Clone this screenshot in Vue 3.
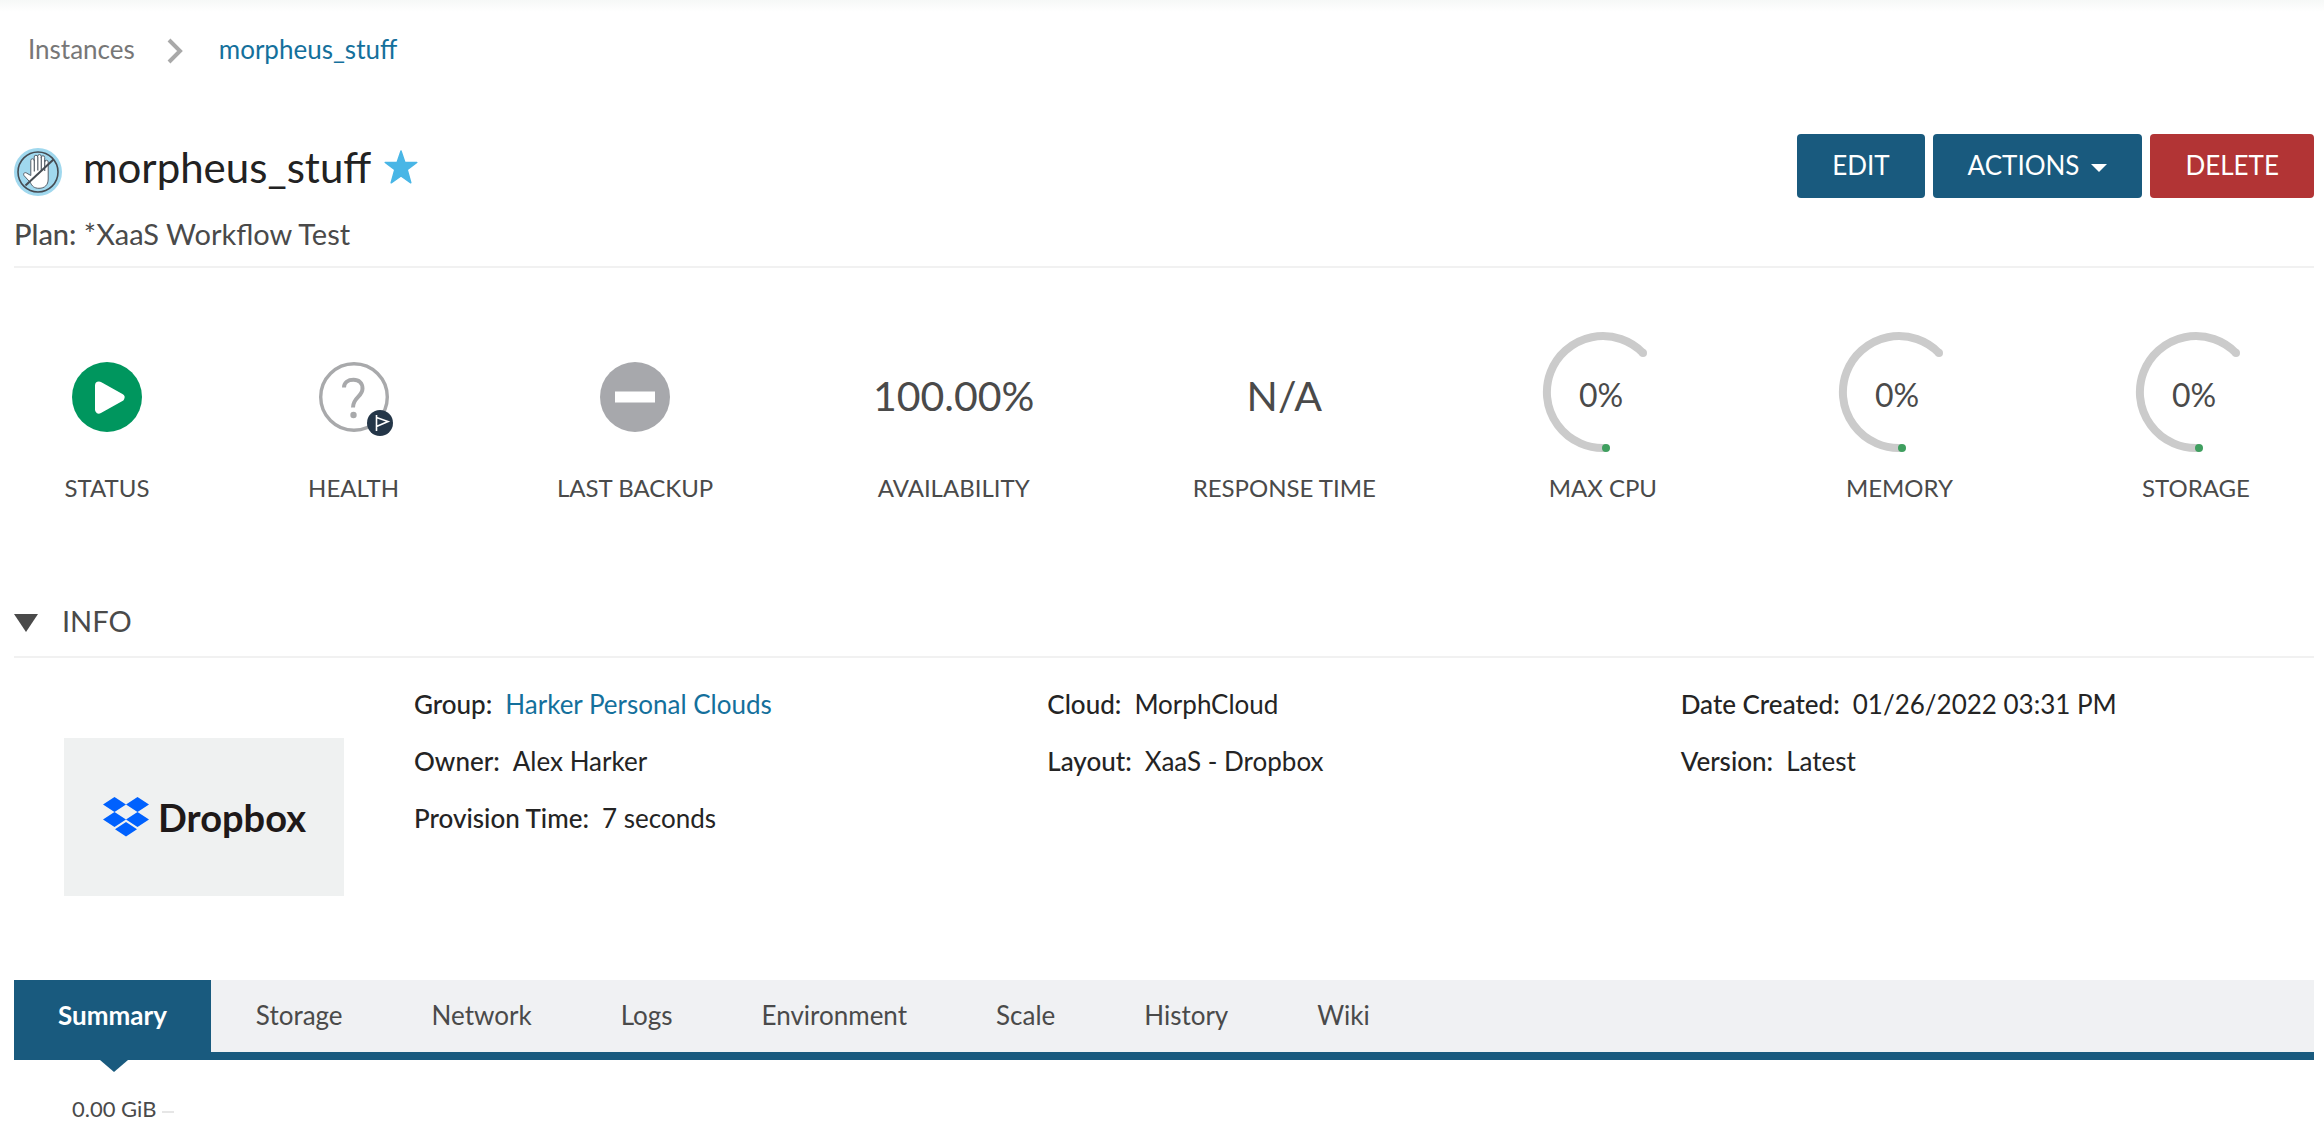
<script setup>
const stats = [
  { label: 'Status', kind: 'running' },
  { label: 'Health', kind: 'unknown' },
  { label: 'Last Backup', kind: 'none' },
  { label: 'Availability', kind: 'text', value: '100.00%' },
  { label: 'Response Time', kind: 'text', value: 'N/A' },
  { label: 'Max CPU', kind: 'gauge', value: '0%' },
  { label: 'Memory', kind: 'gauge', value: '0%' },
  { label: 'Storage', kind: 'gauge', value: '0%' },
]

const details = [
  [
    { label: 'Group', value: 'Harker Personal Clouds', link: true },
    { label: 'Owner', value: 'Alex Harker' },
    { label: 'Provision Time', value: '7 seconds' },
  ],
  [
    { label: 'Cloud', value: 'MorphCloud' },
    { label: 'Layout', value: 'XaaS - Dropbox' },
  ],
  [
    { label: 'Date Created', value: '01/26/2022 03:31 PM' },
    { label: 'Version', value: 'Latest' },
  ],
]

const tabs = ['Summary', 'Storage', 'Network', 'Logs', 'Environment', 'Scale', 'History', 'Wiki']
</script>

<template>
  <div class="page">
    <nav class="breadcrumb" aria-label="Breadcrumb">
      <a href="#" class="crumb">Instances</a>
      <svg class="chevron" width="16" height="26" viewBox="0 0 16 26" aria-hidden="true">
        <path d="M2 2 13 13 2 24" fill="none" stroke="#a9a9a9" stroke-width="4" />
      </svg>
      <a href="#" class="crumb current">morpheus_stuff</a>
    </nav>

    <header class="header">
      <div class="title-row">
        <svg class="instance-icon" width="48" height="48" viewBox="0 0 48 48" aria-hidden="true">
          <circle cx="24" cy="24" r="24" fill="#a0d8ee" />
          <path
            d="M16.800 27.500V12.500a1.700 1.700 0 0 1 3.400 0V9a1.700 1.700 0 0 1 3.500 0V8.300a1.700 1.700 0 0 1 3.500 0V9.500a1.700 1.700 0 0 1 3.500 0V14a1.700 1.700 0 0 1 3.500 0v17c0 6-3.500 9.300-9.200 9.300-5 0-7-2.300-8.800-6L10 27.600c-1.200-2.400 1-3.800 2.800-2.400Z"
            fill="#fff" stroke="#58606a" stroke-width="1" stroke-linejoin="round"
          />
          <path d="M20.300 12v11.500M23.800 9v13.500M27.300 9v13.500M30.700 12v11" stroke="#58606a" stroke-width="1.200" />
          <path d="M11.500 37.500 39.500 11.500" stroke="#454b52" stroke-width="2" />
          <circle cx="24" cy="24" r="20" fill="none" stroke="#454b52" stroke-width="1.600" />
        </svg>
        <h1>morpheus_stuff</h1>
        <svg class="star" width="34" height="34" viewBox="0 0 34 34" aria-hidden="true">
          <path
            d="M17 1 20.800 12.200 32.800 12.400 23.200 19.600 26.800 32.800 17 26 7.200 32.800 10.800 19.600 1.200 12.400 13.200 12.200Z"
            fill="#49b6e6" stroke="#49b6e6" stroke-width="1.500" stroke-linejoin="round"
          />
        </svg>
        <div class="actions">
          <button type="button">Edit</button>
          <button type="button">
            Actions
            <svg width="16" height="8" viewBox="0 0 16 8" aria-hidden="true"><path d="M0 0h16L8 8Z" fill="#fff" /></svg>
          </button>
          <button type="button" class="danger">Delete</button>
        </div>
      </div>
      <p class="plan"><strong>Plan:</strong> *XaaS Workflow Test</p>
    </header>

    <section class="stats" aria-label="Instance health">
      <div v-for="stat in stats" :key="stat.label" class="stat">
        <div class="figure">
          <svg v-if="stat.kind === 'running'" width="70" height="70" viewBox="0 0 70 70" aria-hidden="true">
            <circle cx="35" cy="35" r="35" fill="#00965e" />
            <path d="M27 23.500 48.500 35.500 27 47.500Z" fill="#fff" stroke="#fff" stroke-width="8" stroke-linejoin="round" />
          </svg>
          <svg v-else-if="stat.kind === 'unknown'" class="health" width="76" height="74" viewBox="0 0 76 74" aria-hidden="true">
            <circle cx="35" cy="35" r="33.300" fill="none" stroke="#a8a9ab" stroke-width="3.400" />
            <path d="M25 25.500C25 20.500 29 17.800 34.500 17.800S43.500 21 43.500 26.500C43.500 35 34 35 34 45.500" fill="none" stroke="#a8a9ab" stroke-width="4" />
            <circle cx="34.500" cy="53" r="3.200" fill="#a8a9ab" />
            <circle cx="61" cy="61" r="13" fill="#243648" />
            <path d="M57.500 53v16M57.500 55.500 69 59.500 57.500 64.500" fill="none" stroke="#fff" stroke-width="1.600" />
          </svg>
          <svg v-else-if="stat.kind === 'none'" width="70" height="70" viewBox="0 0 70 70" aria-hidden="true">
            <circle cx="35" cy="35" r="35" fill="#a7a8ac" />
            <path d="M15 29.500h40v11H15Z" fill="#fff" />
          </svg>
          <svg v-else-if="stat.kind === 'gauge'" class="gauge" width="138" height="130" viewBox="0 0 138 130">
            <path d="M109 21A56 56 0 1 0 72 116" fill="none" stroke="#cbcbcb" stroke-width="8" />
            <circle cx="109" cy="21" r="4" fill="#cbcbcb" />
            <circle cx="72" cy="116" r="4" fill="#3f9f5f" />
            <text x="67" y="75" text-anchor="middle">{{ stat.value }}</text>
          </svg>
          <span v-else class="value">{{ stat.value }}</span>
        </div>
        <div class="stat-label">{{ stat.label }}</div>
      </div>
    </section>

    <section class="info">
      <h2>
        <svg width="24" height="18" viewBox="0 0 24 18" aria-hidden="true"><path d="M0 0h24L12 18Z" fill="#4a4a4a" /></svg>
        Info
      </h2>
      <div class="info-body">
        <div class="logo">
          <svg width="48" height="42" viewBox="0 0 48 42" aria-hidden="true">
            <path d="M12.500 1 24 8.500 12.500 16 1 8.500ZM35.500 1 47 8.500 35.500 16 24 8.500ZM12.500 16 24 23.500 12.500 31 1 23.500ZM35.500 16 47 23.500 35.500 31 24 23.500ZM24 26 35 33.300 24 40.500 13 33.300Z" fill="#0061fe" />
          </svg>
          <span>Dropbox</span>
        </div>
        <dl v-for="(column, i) in details" :key="i">
          <div v-for="item in column" :key="item.label">
            <dt>{{ item.label }}:</dt>
            <dd>
              <a v-if="item.link" href="#">{{ item.value }}</a>
              <template v-else>{{ item.value }}</template>
            </dd>
          </div>
        </dl>
      </div>
    </section>

    <nav class="tabs" aria-label="Instance sections">
      <a v-for="(tab, i) in tabs" :key="tab" href="#" :class="{ active: i === 0 }">{{ tab }}</a>
    </nav>

    <div class="axis"><span>0.00 GiB</span><i class="tick"></i></div>
  </div>
</template>

<style>
body {
  margin: 0;
  background: #fff;
}
</style>

<style scoped>
.page {
  box-sizing: border-box;
  padding: 33px 10px 0 14px;
  background: linear-gradient(#f6f8f7, #fff 12px);
  color: #4a4a4a;
  font-family: Lato, "Open Sans", sans-serif;
  font-size: 26px;
  line-height: 32px;
}

a {
  color: #14709c;
  text-decoration: none;
}

.breadcrumb {
  display: flex;
  align-items: center;
  padding-left: 14px;
}

.crumb {
  color: #777;
}

.crumb.current {
  color: #14709c;
}

.chevron {
  margin: 4px 36px 0 32px;
}

.header {
  margin-top: 69px;
  padding-bottom: 12px;
  border-bottom: 2px solid #f1f1f1;
}

.title-row {
  display: flex;
  align-items: center;
  height: 64px;
}

.instance-icon {
  align-self: flex-end;
  margin: 0 21px 2px 0;
}

h1 {
  margin: 2px 0 0;
  color: #222;
  font-size: 42px;
  font-weight: 400;
  line-height: 60px;
}

.star {
  margin: 2px 0 0 13px;
}

.actions {
  display: flex;
  gap: 8px;
  margin-left: auto;
}

button {
  display: flex;
  align-items: center;
  gap: 12px;
  height: 64px;
  padding: 0 35px 2px;
  border: 0;
  border-radius: 4px;
  background: #195a7e;
  color: #fff;
  font: inherit;
  text-transform: uppercase;
}

button svg {
  margin-top: 6px;
}

button.danger {
  background: #b23435;
}

.plan {
  margin: 16px 0 0;
  font-size: 29px;
  line-height: 40px;
}

strong {
  font-weight: 500;
}

.stats {
  display: grid;
  grid-template-columns: 88px 88px 158px 162px 182px 138px 138px 138px;
  justify-content: space-between;
  padding: 64px 49px 0;
}

.stat {
  display: flex;
  flex-direction: column;
  align-items: center;
  white-space: nowrap;
}

.figure {
  display: flex;
  align-items: center;
  height: 130px;
}

.health {
  margin: 4px 0 0 6px;
}

.gauge text {
  fill: #4a4a4a;
  font-size: 32px;
}

.value {
  align-self: flex-start;
  font-size: 41px;
  line-height: 127px;
}

.stat-label {
  margin-top: 10px;
  font-size: 24px;
  text-transform: uppercase;
}

h2 {
  display: flex;
  align-items: center;
  gap: 24px;
  margin: 97px 0 0;
  padding-bottom: 15px;
  border-bottom: 2px solid #f1f1f1;
  font-size: 29px;
  font-weight: 400;
  line-height: 40px;
  text-transform: uppercase;
}

h2 svg {
  margin-top: 4px;
}

.info-body {
  display: grid;
  grid-template-columns: 400px repeat(3, 1fr);
  padding-top: 30px;
}

.logo {
  display: flex;
  align-items: center;
  justify-content: center;
  gap: 8px;
  width: 280px;
  height: 158px;
  margin: 50px 0 0 50px;
  background: #eff1f1;
  color: #1e1919;
  font-size: 38px;
  font-weight: 700;
}

dl {
  display: flex;
  flex-direction: column;
  gap: 25px;
  margin: 0;
  color: #242424;
}

dl div {
  display: flex;
  gap: 13px;
}

dt {
  font-weight: 500;
}

dd {
  margin: 0;
}

.tabs {
  display: flex;
  gap: 1px;
  margin-top: 84px;
  border-bottom: 8px solid #195a7e;
  background: #f0f1f3;
}

.tabs a {
  height: 72px;
  padding: 0 44px;
  color: #4a4a4a;
  line-height: 70px;
}

.tabs .active {
  position: relative;
  background: #195a7e;
  color: #fff;
  font-weight: 700;
}

.active::after {
  content: "";
  position: absolute;
  top: 80px;
  left: calc(50% - 12px);
  border: 14px solid transparent;
  border-top: 12px solid #195a7e;
  border-bottom: 0;
}

.axis {
  display: flex;
  align-items: center;
  gap: 6px;
  padding: 35px 0 0 58px;
  font-size: 22px;
  line-height: 28px;
}

.tick {
  width: 12px;
  height: 2px;
  margin-top: 6px;
  background: #e6e6e6;
}
</style>
